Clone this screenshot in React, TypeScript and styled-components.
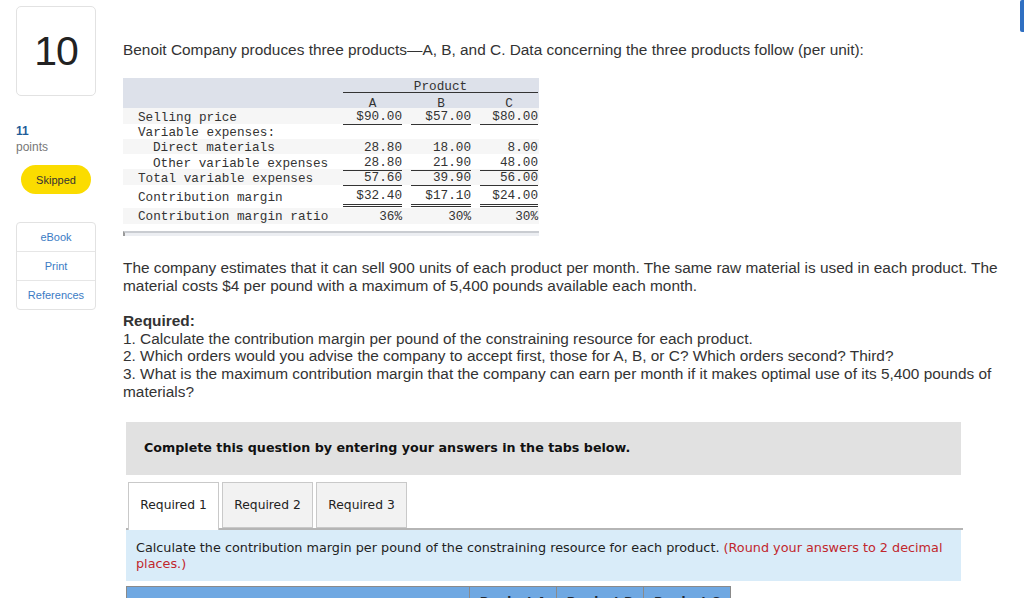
import styled, { createGlobalStyle } from "styled-components";

const GlobalStyle = createGlobalStyle`
  html, body { margin: 0; padding: 0; background: #fff; }
  body { font-family: "Liberation Sans", Arial, sans-serif; color: #333; }
`;

const rows = [
  { label: "Selling price", indent: 0, vals: ["$90.00", "$57.00", "$80.00"], line: "single", shade: true, h: 16 },
  { label: "Variable expenses:", indent: 0, vals: ["", "", ""], line: "none", shade: false, h: 15 },
  { label: "Direct materials", indent: 1, vals: ["28.80", "18.00", "8.00"], line: "none", shade: true, h: 15 },
  { label: "Other variable expenses", indent: 1, vals: ["28.80", "21.90", "48.00"], line: "single", shade: false, h: 15 },
  { label: "Total variable expenses", indent: 0, vals: ["57.60", "39.90", "56.00"], line: "single", shade: true, h: 16 },
  { label: "Contribution margin", indent: 0, vals: ["$32.40", "$17.10", "$24.00"], line: "double", shade: false, h: 23 },
  { label: "Contribution margin ratio", indent: 0, vals: ["36%", "30%", "30%"], line: "none", shade: true, h: 16 },
];

const Page = styled.div`
  display: flex;
  padding: 6px 0 0 16px;
  width: 1024px;
  height: 598px;
  box-sizing: border-box;
  overflow: hidden;
  position: relative;
`;

const Sidebar = styled.aside`
  width: 80px;
  flex-shrink: 0;
  display: flex;
  flex-direction: column;
`;

const NumberCard = styled.div`
  height: 90px;
  border: 1px solid #e2e2e2;
  border-radius: 5px;
  box-sizing: border-box;
  display: flex;
  align-items: center;
  justify-content: center;
  font-size: 41px;
  color: #222;
  letter-spacing: -1px;
`;

const Points = styled.div`
  margin-top: 27px;
  font-size: 12px;
  line-height: 16px;
  color: #777;
  b {
    display: block;
    color: #1f5c99;
    font-weight: 600;
  }
`;

const SkippedPill = styled.div`
  margin: 10px 0 0 5px;
  width: 70px;
  height: 29px;
  border-radius: 15px;
  background: #fbdc00;
  display: flex;
  align-items: center;
  justify-content: center;
  font-size: 11px;
  color: #333;
`;

const LinkBox = styled.div`
  margin-top: 28px;
  border: 1px solid #e2e2e2;
  border-radius: 4px;
  display: flex;
  flex-direction: column;
`;

const SideLink = styled.a`
  height: 28px;
  display: flex;
  align-items: center;
  justify-content: center;
  font-size: 11px;
  color: #3b7bc4;
  text-decoration: none;
  & + & {
    border-top: 1px solid #e6e6e6;
  }
`;

const Main = styled.main`
  margin-left: 27px;
  width: 886px;
  padding-top: 35px;
  font-size: 15.4px;
  line-height: 18px;
  color: #333;
`;

const Title = styled.p`
  margin: 0;
  white-space: nowrap;
`;

const DataTable = styled.div`
  margin-top: 19px;
  width: 416px;
  font-family: "Liberation Mono", "Courier New", monospace;
  font-size: 12.7px;
  line-height: 14px;
  color: #333;
`;

const GridRow = styled.div<{ $shade?: boolean; $h: number; $head?: boolean; $top?: number }>`
  display: grid;
  grid-template-columns: 211px 59px 60px 58px;
  grid-template-rows: 1fr;
  column-gap: 9px;
  height: ${(p) => p.$h}px;
  padding-top: ${(p) => (p.$top === undefined ? 2 : p.$top)}px;
  box-sizing: border-box;
  align-items: center;
  background: ${(p) => (p.$head ? "#dde1ea" : p.$shade ? "#f6f6f6" : "#fff")};
`;

const ProductHead = styled.div`
  grid-column: 2 / 5;
  text-align: center;
  border-bottom: 1px solid #333;
  height: 15px;
  padding-top: 2px;
  box-sizing: border-box;
  align-self: stretch;
`;

const Cell = styled.div<{ $indent?: number }>`
  padding-left: ${(p) => 15 + (p.$indent || 0) * 15}px;
  white-space: nowrap;
`;

const ColHead = styled.div`
  text-align: center;
`;

const Val = styled.div<{ $line: string }>`
  align-self: stretch;
  display: flex;
  align-items: center;
  justify-content: flex-end;
  box-sizing: border-box;
  border-bottom: ${(p) =>
    p.$line === "single" ? "1px solid #333" : p.$line === "double" ? "3px double #333" : "none"};
  margin-bottom: ${(p) => (p.$line === "double" ? "1px" : "0")};
`;

const ScrollBar = styled.div`
  margin-top: 7px;
  width: 416px;
  height: 5px;
  border-top: 2px solid #c9ccd1;
  border-left: 2px solid #9a9a9a;
  background: #eceef2;
  box-sizing: border-box;
`;

const Para = styled.p`
  margin: 23px 0 0;
  line-height: 18px;
`;

const Required = styled.div`
  margin-top: 17px;
  line-height: 17.7px;
  b {
    font-weight: 700;
  }
`;

const InstructionBox = styled.div`
  margin: 21px 0 0 3px;
  width: 835px;
  height: 53px;
  background: #e1e1e1;
  display: flex;
  align-items: center;
  padding-left: 18px;
  box-sizing: border-box;
  font-family: "DejaVu Sans", Verdana, sans-serif;
  font-weight: 700;
  font-size: 12.7px;
  color: #111;
`;

const TabBar = styled.div`
  margin: 7px 0 0 3px;
  width: 835px;
  height: 46px;
  display: flex;
  gap: 3px;
  padding-left: 2px;
  box-sizing: content-box;
  border-bottom: 2px solid #b5b5b5;
`;

const Tab = styled.div<{ $active?: boolean }>`
  width: 91px;
  height: ${(p) => (p.$active ? "48px" : "46px")};
  padding-bottom: ${(p) => (p.$active ? "2px" : "0")};
  box-sizing: border-box;
  border: 1px solid #c9c9c9;
  border-bottom: ${(p) => (p.$active ? "none" : "1px solid #c9c9c9")};
  background: ${(p) => (p.$active ? "#fff" : "#f2f2f2")};
  display: flex;
  align-items: center;
  justify-content: center;
  font-family: "DejaVu Sans", Verdana, sans-serif;
  font-size: 12.3px;
  color: #222;
`;

const InfoBox = styled.div`
  margin-left: 3px;
  width: 835px;
  height: 51px;
  background: #d9ecf9;
  padding: 10px 10px 0;
  box-sizing: border-box;
  font-family: "DejaVu Sans", Verdana, sans-serif;
  font-size: 12.8px;
  line-height: 16px;
  color: #222;
`;

const Hint = styled.span`
  color: #c1272d;
`;

const AnswerHead = styled.div`
  margin: 5px 0 0 3px;
  display: grid;
  grid-template-columns: 342px 87px 87px 87px;
  width: 603px;
  border: 1px solid #8a8a8a;
  border-bottom: none;
  background: #6fa8e2;
  height: 14px;
  font-family: "DejaVu Sans", Verdana, sans-serif;
  font-size: 12px;
  font-weight: 700;
  line-height: 14px;
  color: #1e2a38;
  & > div {
    text-align: center;
    padding-top: 8px;
    white-space: nowrap;
    overflow: hidden;
  }
  & > div + div {
    border-left: 1px solid #8a8a8a;
  }
`;

const EdgeTab = styled.div`
  position: absolute;
  top: 0;
  right: 0;
  width: 4px;
  height: 32px;
  background: #2f6fc2;
  border-radius: 2px 0 0 2px;
`;

export default function App() {
  return (
    <>
      <GlobalStyle />
      <Page>
        <Sidebar>
          <NumberCard>10</NumberCard>
          <Points>
            <b>11</b>
            points
          </Points>
          <SkippedPill>Skipped</SkippedPill>
          <LinkBox>
            <SideLink>eBook</SideLink>
            <SideLink>Print</SideLink>
            <SideLink>References</SideLink>
          </LinkBox>
        </Sidebar>
        <Main>
          <Title>
            Benoit Company produces three products—A, B, and C. Data concerning the three products follow (per
            unit):
          </Title>
          <DataTable>
            <GridRow $head $h={15} $top={0}>
              <div />
              <ProductHead>Product</ProductHead>
            </GridRow>
            <GridRow $head $h={15} $top={4}>
              <div />
              <ColHead>A</ColHead>
              <ColHead>B</ColHead>
              <ColHead>C</ColHead>
            </GridRow>
            {rows.map((r) => (
              <GridRow key={r.label} $shade={r.shade} $h={r.h}>
                <Cell $indent={r.indent}>{r.label}</Cell>
                {r.vals.map((v, i) => (
                  <Val key={i} $line={r.line}>
                    {v}
                  </Val>
                ))}
              </GridRow>
            ))}
          </DataTable>
          <ScrollBar />
          <Para>
            The company estimates that it can sell 900 units of each product per month. The same raw material is
            used in each product. The material costs $4 per pound with a maximum of 5,400 pounds available each
            month.
          </Para>
          <Required>
            <b>Required:</b>
            <br />
            1. Calculate the contribution margin per pound of the constraining resource for each product.
            <br />
            2. Which orders would you advise the company to accept first, those for A, B, or C? Which orders
            second? Third?
            <br />
            3. What is the maximum contribution margin that the company can earn per month if it makes optimal use
            of its 5,400 pounds of materials?
          </Required>
          <InstructionBox>Complete this question by entering your answers in the tabs below.</InstructionBox>
          <TabBar>
            <Tab $active>Required 1</Tab>
            <Tab>Required 2</Tab>
            <Tab>Required 3</Tab>
          </TabBar>
          <InfoBox>
            Calculate the contribution margin per pound of the constraining resource for each product.{" "}
            <Hint>(Round your answers to 2 decimal places.)</Hint>
          </InfoBox>
          <AnswerHead>
            <div />
            <div>Product A</div>
            <div>Product B</div>
            <div>Product C</div>
          </AnswerHead>
        </Main>
        <EdgeTab />
      </Page>
    </>
  );
}
